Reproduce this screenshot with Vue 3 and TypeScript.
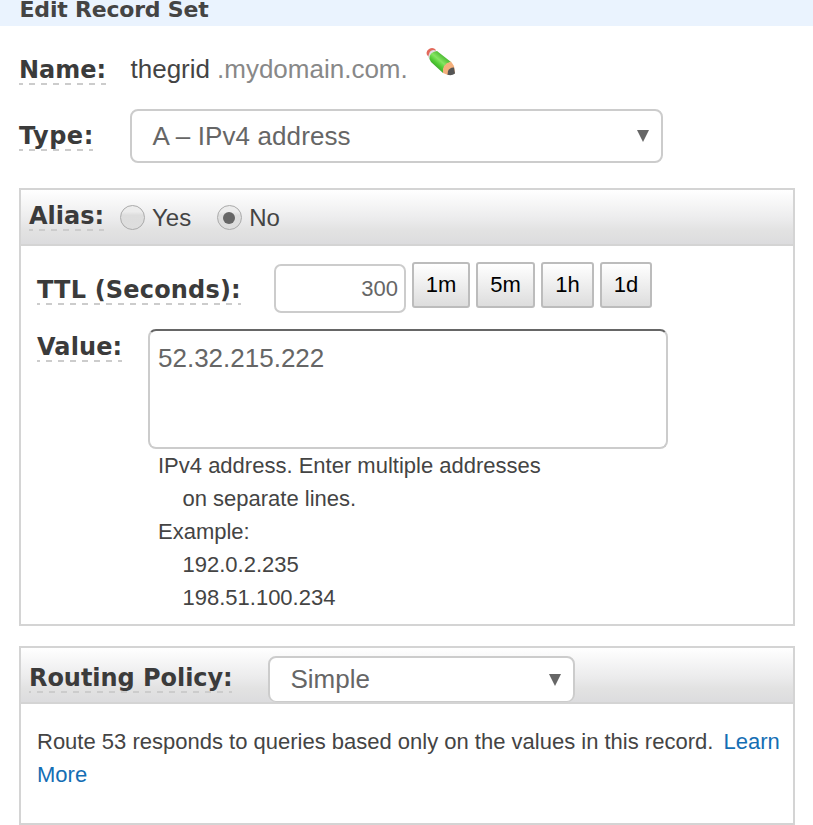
<script setup lang="ts">
import { ref } from 'vue'

const ttlPresets = ['1m', '5m', '1h', '1d']
const alias = ref<'Yes' | 'No'>('No')
const examples = ['192.0.2.235', '198.51.100.234']
</script>

<template>
  <main class="page">
    <header class="title">Edit Record Set</header>

    <div class="row name-row">
      <span class="label name-label">Name:</span>
      <span class="record">thegrid</span>
      <span class="domain">.mydomain.com.</span>
      <svg class="pencil" width="32" height="30" viewBox="0 0 32 30">
        <defs>
          <linearGradient id="barrel" x1="0.2" y1="0.8" x2="0.7" y2="0.2">
            <stop offset="0" stop-color="#35922a" />
            <stop offset="0.35" stop-color="#4fcb32" />
            <stop offset="0.6" stop-color="#85e562" />
            <stop offset="1" stop-color="#44b42c" />
          </linearGradient>
        </defs>
        <path d="M2 8 Q0.500 4 4 2 Q8 -0.500 11 3 L5 11 Z" fill="#e3695b" />
        <path d="M4 7 Q5 3 9 3 L13 5 L5 13 L3 10 Z" fill="#dedbe0" />
        <path d="M4.500 12 Q4 5 12 4 L26 15 Q18 17 18 26 L6 15 Z" fill="url(#barrel)" />
        <path d="M18 26 Q17 17 26 14.500 L29 19 L30 26 L23 28 Z" fill="#f4b07c" />
        <path d="M23 24 Q25 20 29 20.500 L30 26.500 Q27 29 22.500 27.800 Z" fill="#555555" />
      </svg>
    </div>

    <div class="row type-row">
      <span class="label type-label">Type:</span>
      <div class="select type-select">
        <span>A – IPv4 address</span>
        <svg class="arrow" width="12" height="12" viewBox="0 0 12 12"><path d="M0 0H12L6 12Z" fill="#666" /></svg>
      </div>
    </div>

    <section class="panel alias-panel">
      <div class="panel-head">
        <span class="label alias-label">Alias:</span>
        <label class="option" @click="alias = 'Yes'">
          <span class="radio"><i v-if="alias === 'Yes'" /></span>Yes
        </label>
        <label class="option option-no" @click="alias = 'No'">
          <span class="radio"><i v-if="alias === 'No'" /></span>No
        </label>
      </div>
      <div class="ttl-row">
        <span class="label ttl-label">TTL (Seconds):</span>
        <div class="ttl-input">300</div>
        <div class="presets">
          <button v-for="p in ttlPresets" :key="p" :class="['preset', 'p' + p]">{{ p }}</button>
        </div>
      </div>
      <div class="value-row">
        <span class="label value-label">Value:</span>
        <div>
          <div class="value-box">52.32.215.222</div>
          <div class="help">
            <p>IPv4 address. Enter multiple addresses</p>
            <p class="indent">on separate lines.</p>
            <p>Example:</p>
            <p v-for="e in examples" :key="e" class="indent">{{ e }}</p>
          </div>
        </div>
      </div>
    </section>

    <section class="panel routing-panel">
      <div class="panel-head">
        <span class="label routing-label">Routing Policy:</span>
        <div class="select routing-select">
          <span>Simple</span>
          <svg class="arrow" width="12" height="12" viewBox="0 0 12 12"><path d="M0 0H12L6 12Z" fill="#666" /></svg>
        </div>
      </div>
      <p class="desc">Route 53 responds to queries based only on the values in this record. <a class="link">Learn More</a></p>
    </section>
  </main>
</template>

<style>
body {
  margin: 0;
  background: #fff;
}
</style>

<style scoped>
* {
  box-sizing: border-box;
}
.page {
  width: 813px;
  height: 825px;
  font-family: "Liberation Sans", Arial, sans-serif;
  color: #444;
}
.title {
  height: 26px;
  padding-left: 19.5px;
  background: #eaf3fe;
  font: bold 22px/20px "DejaVu Sans", Verdana, sans-serif;
  letter-spacing: -0.2px;
  color: #444;
  white-space: nowrap;
}
.label {
  --phase: -2px;
  flex: none;
  height: 29px;
  font: bold 24px/28px "DejaVu Sans", Verdana, sans-serif;
  color: #3b3b3b;
  white-space: nowrap;
  background: repeating-linear-gradient(90deg, #ccc 0 6px, transparent 6px 12px) var(--phase) 27px / 240px 2px repeat-x;
}
.row {
  display: flex;
  align-items: flex-start;
  padding-left: 19px;
}
.name-row {
  height: 83px;
  padding-top: 30px;
  font-size: 26px;
  line-height: 26px;
}
.name-label {
  width: 87px;
}
.record {
  width: 80px;
  margin-left: 24.5px;
}
.domain {
  margin-left: 6.5px;
  color: #888;
}
.pencil {
  margin: -9px 0 0 17px;
}
.type-row {
  height: 79px;
}
.type-label {
  width: 74px;
  margin-top: 13px;
  letter-spacing: 0.5px;
}
.select {
  display: flex;
  align-items: center;
  justify-content: space-between;
  border: 2px solid #ccc;
  border-radius: 8px;
  background: #fff;
  padding: 0 12px 0 20.5px;
  font-size: 26px;
  color: #666;
}
.type-select {
  width: 533px;
  height: 54px;
  margin-left: 37px;
  letter-spacing: 0.1px;
}
.panel {
  width: 776px;
  margin-left: 19px;
  border: 2px solid #d4d4d4;
}
.panel-head {
  display: flex;
  align-items: flex-start;
  height: 56px;
  padding-left: 8px;
  border-bottom: 2px solid #d4d4d4;
  background: linear-gradient(#fff, #ebebec 55%, #e2e2e2 75%, #dcdcde);
}
.alias-panel {
  height: 438px;
}
.alias-label {
  width: 75px;
  margin-top: 12px;
}
.option {
  display: flex;
  align-items: center;
  height: 25px;
  margin: 15px 0 0 16px;
  font-size: 24px;
}
.option-no {
  margin-left: 26px;
}
.radio {
  display: flex;
  align-items: center;
  justify-content: center;
  width: 25px;
  height: 25px;
  margin-right: 7px;
  border: 1px solid #aaa;
  border-radius: 50%;
  background: linear-gradient(#ececec 25%, #ddd 40%, #dedede);
}
.radio i {
  width: 12px;
  height: 12px;
  margin-right: 1px;
  border-radius: 50%;
  background: #666;
}
.ttl-row {
  display: flex;
  align-items: flex-start;
  height: 83px;
  padding: 16px 0 0 16px;
}
.ttl-label {
  --phase: -3px;
  width: 204px;
  margin-top: 14px;
  letter-spacing: 0.18px;
}
.ttl-input {
  width: 132px;
  height: 49px;
  margin: 2px 0 0 33px;
  padding-right: 6px;
  border: 2px solid #ccc;
  border-radius: 7px;
  font-size: 22px;
  line-height: 45px;
  text-align: right;
  color: #666;
}
.presets {
  display: flex;
  gap: 6px;
  margin-left: 6px;
}
.preset {
  height: 46px;
  padding: 0;
  border: 2px solid #bcbcbc;
  border-radius: 3px;
  background: linear-gradient(#fff, #ddd);
  font: 22px "Liberation Sans", Arial, sans-serif;
  color: #000;
}
.p1m {
  width: 58px;
}
.p5m {
  width: 59px;
}
.p1h {
  width: 53px;
}
.p1d {
  width: 52px;
}
.value-row {
  display: flex;
  align-items: flex-start;
  padding-left: 16px;
}
.value-label {
  --phase: -3px;
  width: 85px;
  margin-top: 4px;
  letter-spacing: 0.1px;
}
.value-box {
  width: 520px;
  height: 120px;
  margin-left: 26px;
  padding: 12px 8px;
  border: 2px solid #ccc;
  border-top-color: #666;
  border-radius: 8px;
  font-size: 26px;
  line-height: 30px;
  color: #666;
}
.help {
  padding-left: 36px;
  font-size: 22px;
  line-height: 33px;
}
p {
  margin: 0;
}
.indent {
  padding-left: 24.5px;
}
.routing-panel {
  height: 179px;
  margin-top: 20px;
}
.routing-label {
  --phase: -4px;
  width: 203px;
  margin-top: 16px;
  letter-spacing: -0.05px;
}
.routing-select {
  width: 307px;
  height: 46px;
  margin: 8px 0 0 36px;
  border-bottom-width: 1px;
}
.desc {
  padding: 21px 10px 0 16px;
  font-size: 22px;
  line-height: 33px;
}
.link {
  margin-left: 4px;
  color: #146eb4;
}
</style>
